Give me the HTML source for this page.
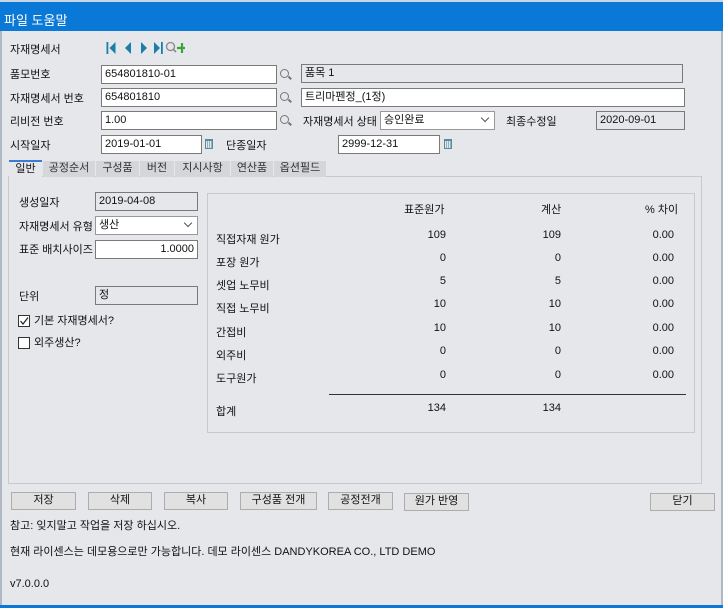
<!DOCTYPE html>
<html><head><meta charset="utf-8"><style>
*{box-sizing:border-box;margin:0;padding:0}
body{width:723px;height:608px;overflow:hidden;background:#e6e7eb;font-family:"Liberation Sans","Noto Sans CJK KR",sans-serif;font-size:11px;color:#111;position:relative}
.a{position:absolute;white-space:nowrap}
.tb{position:absolute;left:0;top:0;width:723px;height:31px;background:#0a78d6;color:#fff;font-size:13px;padding:8px 0 0 4px;border-top:2px solid #c9d6e3}
.in{position:absolute;background:#fff;border:1px solid #7a7a7a;height:19px;padding:1px 3px;line-height:14px}
.gr{position:absolute;background:#e6e7eb;border:1px solid #7a7a7a;height:19px;padding:1px 3px;line-height:14px}
.btn{position:absolute;top:492px;height:18px;background:#e1e1e1;border:1px solid #adadad;text-align:center;line-height:15px;font-size:11px}
.tab{position:absolute;top:161px;height:16px;background:#d5d6da;text-align:center;line-height:15px;font-size:11px;color:#333}
.num{position:absolute;text-align:right;width:60px}
.mag{position:absolute;width:9px;height:9px;border:1.5px solid #777;border-radius:50%}
.mag:after{content:"";position:absolute;left:7px;top:7px;width:4px;height:1.5px;background:#777;transform:rotate(45deg)}
.cal{position:absolute;width:8px;height:10px;border:1px solid #5b8aa0;border-top-width:2px;background:repeating-linear-gradient(90deg,#e6e7eb 0 1px,#8fb0c0 1px 2px)}
.chk{position:absolute;width:12px;height:12px;border:1px solid #333;background:#fff}
.dd{position:absolute;right:6px;top:3px;width:6px;height:6px;border-right:1px solid #555;border-bottom:1px solid #555;transform:rotate(45deg)}
</style></head><body>
<div class="tb">파일 도움말</div>
<div class="a" style="left:0;top:31px;width:2px;height:577px;background:#b0b8c4"></div>
<div class="a" style="right:0;top:31px;width:2px;height:577px;background:#b0b8c4"></div>
<div class="a" style="left:0;top:605px;width:723px;height:3px;background:#0a78d6"></div>

<div class="a" style="left:10px;top:41px">자재명세서</div>
<svg class="a" style="left:105px;top:40px" width="80" height="16">
<rect x="1.5" y="2" width="1.8" height="12" fill="#1a7ea8"/><path d="M10.5 2 L4.5 8 L10.5 14Z" fill="#1a7ea8"/>
<path d="M26 2 L20 8 L26 14Z" fill="#1a7ea8"/>
<path d="M36 2 L42 8 L36 14Z" fill="#1a7ea8"/>
<path d="M49 2 L55 8 L49 14Z" fill="#1a7ea8"/><rect x="56" y="2" width="1.8" height="12" fill="#1a7ea8"/>
<circle cx="65.5" cy="6.5" r="4" fill="none" stroke="#888" stroke-width="1.3"/><path d="M68.3 9.3 L71 12" stroke="#888" stroke-width="1.6"/>
<path d="M77 3 v10 M72 8 h10" stroke="#3aa43a" stroke-width="2.2"/>
</svg>

<div class="a" style="left:10px;top:66px">품모번호</div>
<div class="in" style="left:101px;top:65px;width:176px">654801810-01</div>
<div class="mag" style="left:280px;top:69px"></div>
<div class="gr" style="left:301px;top:64px;width:382px">품목 1</div>

<div class="a" style="left:10px;top:90px">자재명세서 번호</div>
<div class="in" style="left:101px;top:88px;width:176px">654801810</div>
<div class="mag" style="left:280px;top:92px"></div>
<div class="in" style="left:301px;top:88px;width:384px">트리마펜정_(1정)</div>

<div class="a" style="left:10px;top:113px">리비전 번호</div>
<div class="in" style="left:101px;top:111px;width:176px">1.00</div>
<div class="mag" style="left:280px;top:115px"></div>
<div class="a" style="left:303px;top:113px">자재명세서 상태</div>
<div class="in" style="left:380px;top:111px;width:115px;border-color:#999">승인완료<span class="dd"></span></div>
<div class="a" style="left:506px;top:113px">최종수정일</div>
<div class="gr" style="left:596px;top:111px;width:89px">2020-09-01</div>

<div class="a" style="left:10px;top:137px">시작일자</div>
<div class="in" style="left:101px;top:135px;width:101px">2019-01-01</div>
<div class="cal" style="left:205px;top:139px"></div>
<div class="a" style="left:226px;top:137px">단종일자</div>
<div class="in" style="left:338px;top:135px;width:102px">2999-12-31</div>
<div class="cal" style="left:444px;top:139px"></div>

<div class="a" style="left:8px;top:176px;width:694px;height:308px;border:1px solid #c8c9cd;background:#e6e7eb"></div>
<div class="a" style="left:9px;top:160px;width:33px;height:18px;background:#e6e7eb;border-top:2px solid #3a7bd5;text-align:center;line-height:14px;font-size:11px">일반</div>
<div class="tab" style="left:43px;width:52px">공정순서</div>
<div class="tab" style="left:96px;width:43px">구성품</div>
<div class="tab" style="left:140px;width:34px">버전</div>
<div class="tab" style="left:175px;width:55px">지시사항</div>
<div class="tab" style="left:231px;width:42px">연산품</div>
<div class="tab" style="left:274px;width:52px">옵션필드</div>

<div class="a" style="left:19px;top:194px">생성일자</div>
<div class="gr" style="left:95px;top:192px;width:103px">2019-04-08</div>
<div class="a" style="left:19px;top:218px">자재명세서 유형</div>
<div class="in" style="left:95px;top:216px;width:103px;border-color:#999">생산<span class="dd"></span></div>
<div class="a" style="left:19px;top:241px">표준 배치사이즈</div>
<div class="in" style="left:95px;top:240px;width:103px;text-align:right">1.0000</div>
<div class="a" style="left:19px;top:288px">단위</div>
<div class="gr" style="left:95px;top:286px;width:103px">정</div>
<div class="chk" style="left:18px;top:315px"><svg width="10" height="10" style="position:absolute;left:0;top:0"><path d="M1.5 5 L4 8 L9 1.5" fill="none" stroke="#222" stroke-width="1.2"/></svg></div>
<div class="a" style="left:34px;top:312px">기본 자재명세서?</div>
<div class="chk" style="left:18px;top:337px"></div>
<div class="a" style="left:34px;top:334px">외주생산?</div>

<div class="a" style="left:207px;top:193px;width:488px;height:240px;border:1px solid #c8c9cd"></div>
<div class="a" style="left:404px;top:201px">표준원가</div>
<div class="a" style="left:541px;top:201px">계산</div>
<div class="a" style="left:645px;top:201px">% 차이</div>

<div class="a" style="left:216px;top:231px">직접자재 원가</div>
<div class="a" style="left:216px;top:254px">포장 원가</div>
<div class="a" style="left:216px;top:277px">셋업 노무비</div>
<div class="a" style="left:216px;top:300px">직접 노무비</div>
<div class="a" style="left:216px;top:324px">간접비</div>
<div class="a" style="left:216px;top:347px">외주비</div>
<div class="a" style="left:216px;top:370px">도구원가</div>
<div class="a" style="left:216px;top:403px">합계</div>

<div class="num" style="left:386px;top:229px">109</div><div class="num" style="left:501px;top:229px">109</div><div class="num" style="left:614px;top:229px">0.00</div>
<div class="num" style="left:386px;top:252px">0</div><div class="num" style="left:501px;top:252px">0</div><div class="num" style="left:614px;top:252px">0.00</div>
<div class="num" style="left:386px;top:275px">5</div><div class="num" style="left:501px;top:275px">5</div><div class="num" style="left:614px;top:275px">0.00</div>
<div class="num" style="left:386px;top:298px">10</div><div class="num" style="left:501px;top:298px">10</div><div class="num" style="left:614px;top:298px">0.00</div>
<div class="num" style="left:386px;top:322px">10</div><div class="num" style="left:501px;top:322px">10</div><div class="num" style="left:614px;top:322px">0.00</div>
<div class="num" style="left:386px;top:345px">0</div><div class="num" style="left:501px;top:345px">0</div><div class="num" style="left:614px;top:345px">0.00</div>
<div class="num" style="left:386px;top:369px">0</div><div class="num" style="left:501px;top:369px">0</div><div class="num" style="left:614px;top:369px">0.00</div>
<div class="a" style="left:329px;top:394px;width:357px;height:1px;background:#333"></div>
<div class="num" style="left:386px;top:402px">134</div><div class="num" style="left:501px;top:402px">134</div>

<div class="btn" style="left:11px;width:65px">저장</div>
<div class="btn" style="left:88px;width:64px">삭제</div>
<div class="btn" style="left:164px;width:64px">복사</div>
<div class="btn" style="left:240px;width:77px">구성품 전개</div>
<div class="btn" style="left:328px;width:65px">공정전개</div>
<div class="btn" style="left:404px;width:65px;top:493px">원가 반영</div>
<div class="btn" style="left:650px;width:65px;top:493px">닫기</div>

<div class="a" style="left:10px;top:517px;font-size:11px">참고: 잊지말고 작업을 저장 하십시오.</div>
<div class="a" style="left:10px;top:543px;font-size:11px">현재 라이센스는 데모용으로만 가능합니다. 데모 라이센스 DANDYKOREA CO., LTD DEMO</div>
<div class="a" style="left:10px;top:578px;font-size:11px">v7.0.0.0</div>
</body></html>
